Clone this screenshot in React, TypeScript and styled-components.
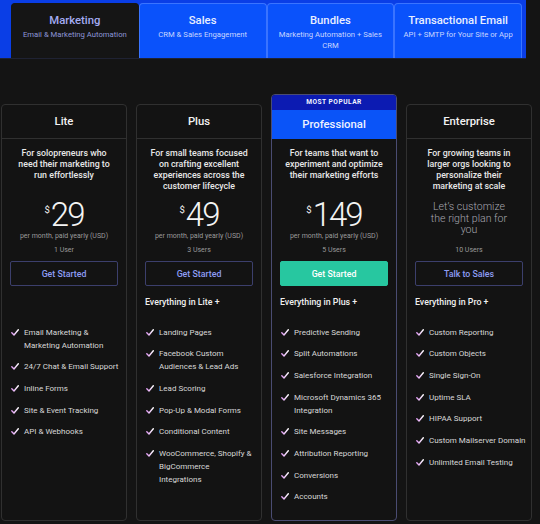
import styled, { createGlobalStyle } from "styled-components";

const GlobalStyle = createGlobalStyle`
  html, body {
    margin: 0;
    padding: 0;
    background: #141414;
    font-family: Roboto, "Liberation Sans", sans-serif;
    -webkit-font-smoothing: antialiased;
  }
`;

const Page = styled.div`
  width: 540px;
  height: 524px;
  overflow: hidden;
  background: #141414;
`;

const TabBar = styled.div`
  width: 526px;
  height: 59px;
  box-sizing: border-box;
  padding: 3px 4px 0 11px;
  background: #0a3ee6;
  border-bottom: 1px solid #1f2233;
  display: grid;
  grid-template-columns: repeat(4, 1fr);
`;

const Tab = styled.div<{ $active?: boolean }>`
  box-sizing: border-box;
  padding-top: 10px;
  text-align: center;
  border-radius: 4px 4px 0 0;
  background: ${(p) => (p.$active ? "#151515" : "#0a52fb")};
  border: 1px solid ${(p) => (p.$active ? "#151515" : "#3a74ff")};
  border-bottom: none;
`;

const TabTitle = styled.div<{ $active?: boolean }>`
  font-size: 11.3px;
  line-height: 14px;
  font-weight: 500;
  color: ${(p) => (p.$active ? "#a3acf2" : "#e8eeff")};
`;

const TabSub = styled.div<{ $active?: boolean }>`
  margin-top: 1px;
  font-size: 7.7px;
  line-height: 11px;
  padding: 0 4px;
  color: ${(p) => (p.$active ? "#8d95d8" : "#c9d6ff")};
`;

const Plans = styled.div`
  width: 531px;
  margin-top: 35px;
  padding-left: 1px;
  height: 427px;
  display: grid;
  grid-template-columns: repeat(4, 1fr);
  column-gap: 9px;
`;

const Card = styled.div<{ $featured?: boolean }>`
  margin-top: ${(p) => (p.$featured ? "0" : "10px")};
  display: flex;
  flex-direction: column;
  background: #131313;
  border: 1px solid ${(p) => (p.$featured ? "#4a4c72" : "#303030")};
  border-radius: 4px;
  overflow: hidden;
`;

const Badge = styled.div`
  height: 15px;
  line-height: 15px;
  background: #0c1bb2;
  color: #f2f4ff;
  text-align: center;
  font-size: 6.6px;
  font-weight: 700;
  letter-spacing: 0.5px;
`;

const CardHead = styled.div<{ $featured?: boolean }>`
  height: ${(p) => (p.$featured ? "28px" : "33px")};
  display: flex;
  align-items: center;
  justify-content: center;
  font-size: 11.3px;
  font-weight: 500;
  color: ${(p) => (p.$featured ? "#eef2ff" : "#f2f2f2")};
  background: ${(p) => (p.$featured ? "#0a54f8" : "transparent")};
  border-bottom: 1px solid ${(p) => (p.$featured ? "#0a54f8" : "#303030")};
`;

const Body = styled.div`
  padding: 0 8px;
  display: flex;
  flex-direction: column;
`;

const Desc = styled.div`
  margin-top: 9px;
  height: 44px;
  padding: 0 2px;
  text-align: center;
  font-size: 8.8px;
  line-height: 11px;
  font-weight: 500;
  color: #e8e8e8;
`;

const Price = styled.div`
  margin-top: 8px;
  height: 30px;
  display: flex;
  justify-content: center;
  align-items: flex-start;
  color: #f4f4f4;
`;

const Dollar = styled.span`
  font-size: 9.5px;
  line-height: 9px;
  margin-top: 5px;
  margin-right: 1px;
  font-weight: 400;
`;

const Amount = styled.span`
  font-size: 33px;
  line-height: 30px;
  font-weight: 300;
  letter-spacing: -2px;
`;

const Small = styled.div<{ $gap: number }>`
  margin-top: ${(p) => p.$gap}px;
  text-align: center;
  font-size: 7px;
  line-height: 10px;
  color: #9a9a9a;
`;

const Custom = styled.div`
  margin-top: 6px;
  height: 43px;
  box-sizing: border-box;
  padding: 3px 10px 0;
  text-align: center;
  font-size: 10.6px;
  line-height: 11.5px;
  font-weight: 300;
  color: #a6a6ae;
`;

const Button = styled.div<{ $primary?: boolean }>`
  margin-top: 6px;
  height: 25px;
  box-sizing: border-box;
  display: flex;
  align-items: center;
  justify-content: center;
  border-radius: 2px;
  font-size: 8.8px;
  font-weight: 500;
  background: ${(p) => (p.$primary ? "#27c7a0" : "transparent")};
  border: 1px solid ${(p) => (p.$primary ? "#27c7a0" : "#3c3f6c")};
  color: ${(p) => (p.$primary ? "#ffffff" : "#8d9df5")};
`;

const Includes = styled.div`
  margin-top: 9.5px;
  height: 13px;
  font-size: 8.8px;
  line-height: 13px;
  font-weight: 500;
  color: #f0f0f0;
`;

const Features = styled.ul`
  list-style: none;
  margin: 17px -5px 0 0;
  padding: 0 0 0 1px;
  display: flex;
  flex-direction: column;
  gap: 8.7px;
`;

const Feature = styled.li`
  display: flex;
  gap: 5px;
  font-size: 8px;
  line-height: 13px;
  color: #d8d8d8;
  white-space: pre-line;
`;

const Tick = styled.svg`
  flex: none;
  width: 8px;
  height: 7px;
  margin-top: 3px;
`;

function Check() {
  return (
    <Tick viewBox="0 0 8 7">
      <defs>
        <linearGradient id="tk" x1="0" y1="0" x2="1" y2="0">
          <stop offset="0" stopColor="#e29cf5" />
          <stop offset="1" stopColor="#ffffff" />
        </linearGradient>
      </defs>
      <path
        d="M0.8 3.8 L3 6 L7.3 0.8"
        fill="none"
        stroke="url(#tk)"
        strokeWidth="1.4"
        strokeLinecap="round"
        strokeLinejoin="round"
      />
    </Tick>
  );
}

interface Plan {
  name: string;
  desc: string;
  price?: string;
  users: string;
  cta: string;
  includes: string;
  features: string[];
  featured?: boolean;
}

const tabs = [
  { title: "Marketing", sub: "Email & Marketing Automation", active: true },
  { title: "Sales", sub: "CRM & Sales Engagement" },
  { title: "Bundles", sub: "Marketing Automation + Sales CRM" },
  { title: "Transactional Email", sub: "API + SMTP for Your Site or App" },
];

const plans: Plan[] = [
  {
    name: "Lite",
    desc: "For solopreneurs who need their marketing to run effortlessly",
    price: "29",
    users: "1 User",
    cta: "Get Started",
    includes: "",
    features: [
      "Email Marketing &\nMarketing Automation",
      "24/7 Chat & Email Support",
      "Inline Forms",
      "Site & Event Tracking",
      "API & Webhooks",
    ],
  },
  {
    name: "Plus",
    desc: "For small teams focused on crafting excellent experiences across the customer lifecycle",
    price: "49",
    users: "3 Users",
    cta: "Get Started",
    includes: "Everything in Lite +",
    features: [
      "Landing Pages",
      "Facebook Custom\nAudiences & Lead Ads",
      "Lead Scoring",
      "Pop-Up & Modal Forms",
      "Conditional Content",
      "WooCommerce, Shopify &\nBigCommerce\nIntegrations",
    ],
  },
  {
    name: "Professional",
    desc: "For teams that want to experiment and optimize their marketing efforts",
    price: "149",
    users: "5 Users",
    cta: "Get Started",
    includes: "Everything in Plus +",
    featured: true,
    features: [
      "Predictive Sending",
      "Split Automations",
      "Salesforce Integration",
      "Microsoft Dynamics 365\nIntegration",
      "Site Messages",
      "Attribution Reporting",
      "Conversions",
      "Accounts",
    ],
  },
  {
    name: "Enterprise",
    desc: "For growing teams in larger orgs looking to personalize their marketing at scale",
    users: "10 Users",
    cta: "Talk to Sales",
    includes: "Everything in Pro +",
    features: [
      "Custom Reporting",
      "Custom Objects",
      "Single Sign-On",
      "Uptime SLA",
      "HIPAA Support",
      "Custom Mailserver Domain",
      "Unlimited Email Testing",
    ],
  },
];

export default function App() {
  return (
    <Page>
      <GlobalStyle />
      <TabBar>
        {tabs.map((t) => (
          <Tab key={t.title} $active={t.active}>
            <TabTitle $active={t.active}>{t.title}</TabTitle>
            <TabSub $active={t.active}>{t.sub}</TabSub>
          </Tab>
        ))}
      </TabBar>
      <Plans>
        {plans.map((p) => (
          <Card key={p.name} $featured={p.featured}>
            {p.featured && <Badge>MOST POPULAR</Badge>}
            <CardHead $featured={p.featured}>{p.name}</CardHead>
            <Body>
              <Desc>{p.desc}</Desc>
              {p.price ? (
                <>
                  <Price>
                    <Dollar>$</Dollar>
                    <Amount>{p.price}</Amount>
                  </Price>
                  <Small $gap={1}>per month, paid yearly (USD)</Small>
                </>
              ) : (
                <Custom>Let’s customize the right plan for you</Custom>
              )}
              <Small $gap={4}>{p.users}</Small>
              <Button $primary={p.featured}>{p.cta}</Button>
              <Includes>{p.includes}</Includes>
              <Features>
                {p.features.map((f) => (
                  <Feature key={f}>
                    <Check />
                    <span>{f}</span>
                  </Feature>
                ))}
              </Features>
            </Body>
          </Card>
        ))}
      </Plans>
    </Page>
  );
}
